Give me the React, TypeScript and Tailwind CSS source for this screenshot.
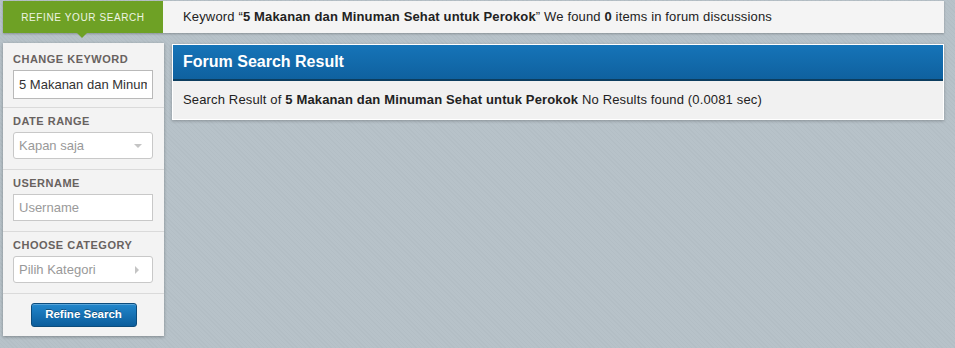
const font = { fontFamily: '"Liberation Sans", Arial, sans-serif' };

type FieldProps = {
  label: string;
  first?: boolean;
  children: React.ReactNode;
};

const Field = ({ label, first, children }: FieldProps) => (
  <div
    className={`border-b border-[#dadada] px-[10px] ${first ? 'pt-[9px] pb-[8px]' : 'pt-[6px] pb-[10px]'}`}
  >
    <div className="mb-1 text-[11px] leading-[14px] font-bold uppercase tracking-[0.5px] text-[#68625f]">
      {label}
    </div>
    {children}
  </div>
);

const SelectBox = ({ text, arrow }: { text: string; arrow: 'down' | 'right' }) => (
  <div className="flex h-[27px] w-[140px] items-center justify-between rounded-[3px] border border-[#c8c8c8] bg-white pr-[10px] pl-[5px] text-[13px] text-[#999]">
    <span>{text}</span>
    {arrow === 'down' ? (
      <span className="h-0 w-0 border-x-[4px] border-t-[4px] border-x-transparent border-t-[#c4c4c4]" />
    ) : (
      <span className="mr-[3px] h-0 w-0 border-y-[4px] border-l-[4px] border-y-transparent border-l-[#c4c4c4]" />
    )}
  </div>
);

export default function App() {
  return (
    <div
      className="h-[348px] w-full bg-[#b5c0c7] bg-[repeating-linear-gradient(45deg,#b3bec5_0px,#b3bec5_1px,#b7c2c9_1px,#b7c2c9_3px)] pt-px pr-[11px] pl-[3px]"
      style={font}
    >
      <div className="flex h-8 items-center bg-[#f4f4f4] shadow-[0_1px_2px_rgba(0,0,0,0.25)]">
        <div className="relative flex h-8 w-[160px] items-center justify-center bg-[#6ea125] text-[10px] tracking-[0.6px] text-[#eef4e4] uppercase">
          Refine your search
          <span className="absolute top-8 left-[74px] h-0 w-0 border-x-[5px] border-t-[5px] border-x-transparent border-t-[#6ea125]" />
        </div>
        <div className="pl-5 text-[13px] tracking-[0.15px] text-[#222]">
          Keyword “<b>5 Makanan dan Minuman Sehat untuk Perokok</b>” We found <b>0</b> items in forum
          discussions
        </div>
      </div>

      <div className="mt-[10px] flex items-start gap-2">
        <div className="w-[161px] bg-[#f3f3f3] shadow-[0_1px_3px_rgba(0,0,0,0.3)]">
          <Field label="Change keyword" first>
            <input
              readOnly
              value="5 Makanan dan Minuman Sehat untuk Perokok"
              className="h-[29px] w-[140px] border border-[#b9b9b9] bg-white px-[5px] text-[13px] text-[#333] outline-none"
              style={font}
            />
          </Field>
          <Field label="Date range">
            <SelectBox text="Kapan saja" arrow="down" />
          </Field>
          <Field label="Username">
            <input
              readOnly
              placeholder="Username"
              className="h-[27px] w-[140px] border border-[#c8c8c8] bg-white px-[5px] text-[13px] text-[#333] outline-none placeholder:text-[#9a9a9a]"
              style={font}
            />
          </Field>
          <Field label="Choose category">
            <SelectBox text="Pilih Kategori" arrow="right" />
          </Field>
          <div className="flex justify-center pt-[9px] pb-[9px]">
            <button className="h-6 w-[106px] rounded-[3px] border border-[#0c4c7c] bg-[linear-gradient(#2287cc,#0b5d9c)] text-[11.5px] font-bold text-white [text-shadow:0_-1px_0_rgba(0,0,0,0.35)] shadow-[inset_0_1px_0_rgba(255,255,255,0.25)]">
              Refine Search
            </button>
          </div>
        </div>

        <div className="mt-px flex-1 border border-white bg-[#f1f1f1] shadow-[0_1px_3px_rgba(0,0,0,0.25)]">
          <div className="flex h-[36px] items-center border-b-2 border-[#0c3d5f] bg-[linear-gradient(#1674b8,#0f619f)] px-[10px] text-[16px] font-bold text-white">
            Forum Search Result
          </div>
          <div className="flex h-[38px] items-center px-[10px] text-[13px] tracking-[0.15px] text-[#222]">
            Search Result of&nbsp;<b>5 Makanan dan Minuman Sehat untuk Perokok</b>&nbsp;No Results found (0.0081 sec)
          </div>
        </div>
      </div>
    </div>
  );
}
